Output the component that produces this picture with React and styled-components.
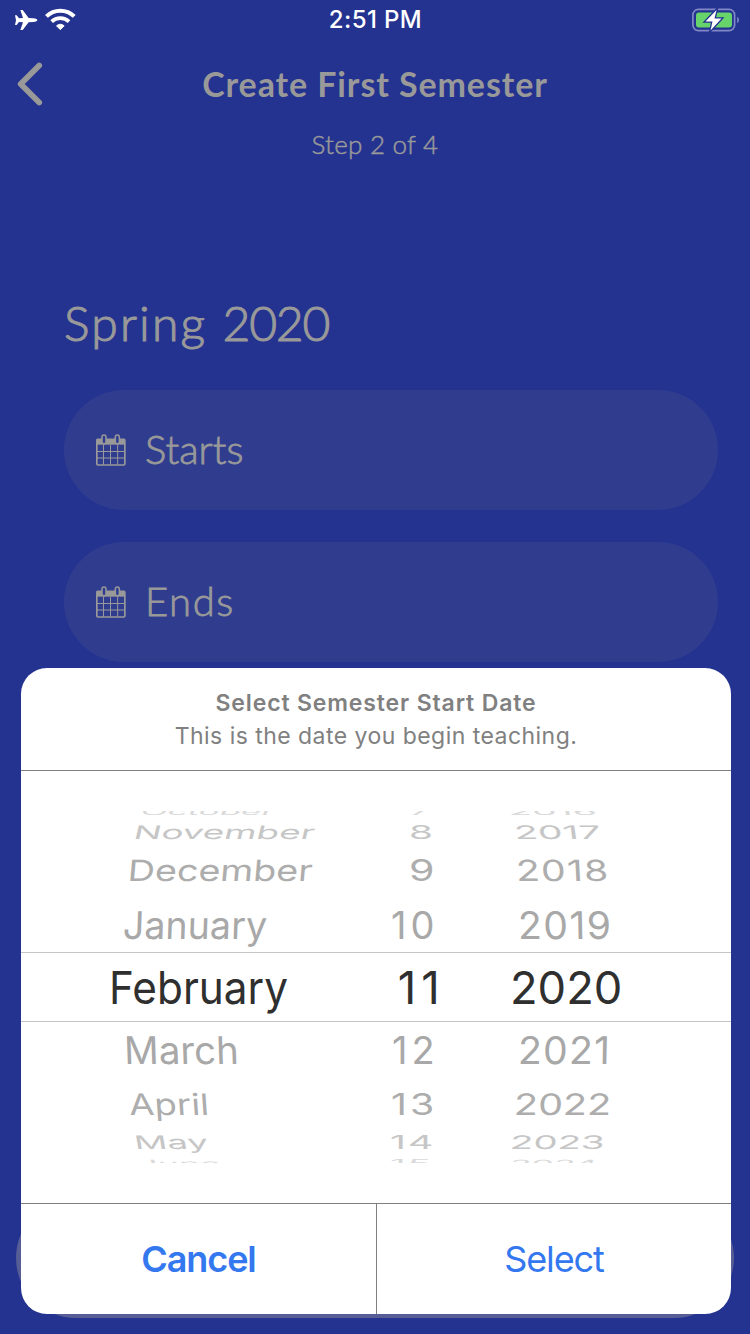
import React from "react";
import styled, { createGlobalStyle } from "styled-components";

const GlobalStyle = createGlobalStyle`
  body {
    margin: 0;
    background: #243290;
  }
  * {
    box-sizing: border-box;
  }
`;

const Screen = styled.div`
  position: relative;
  display: flex;
  flex-direction: column;
  width: 750px;
  height: 1334px;
  overflow: hidden;
  background: #243290;
  color: #999;
  font-family: Lato, "Open Sans", sans-serif;
`;

const StatusBar = styled.div`
  display: grid;
  grid-template-columns: 1fr auto 1fr;
  align-items: center;
  height: 39px;
  padding: 0 11px 0 14px;
`;

const StatusIcons = styled.div`
  display: flex;
  align-items: center;
  gap: 7px;
`;

const Clock = styled.div`
  margin-right: 2px;
  padding-top: 1px;
  color: #fff;
  font: 500 24px/30px Inter, sans-serif;
  letter-spacing: 0.4px;
`;

const BatterySlot = styled.div`
  display: flex;
  justify-content: flex-end;
`;

const Header = styled.div`
  display: grid;
  grid-template-columns: 60px 1fr 60px;
  height: 244px;
`;

const BackButton = styled.div`
  padding: 21px 0 0 15px;
`;

const Heading = styled.div`
  text-align: center;
`;

const Title = styled.div`
  margin-top: 25px;
  font-size: 34px;
  font-weight: 700;
  line-height: 40px;
  letter-spacing: 0.9px;
`;

const Step = styled.div`
  margin-top: 24px;
  font-size: 26px;
  font-weight: 300;
  line-height: 32px;
  letter-spacing: 0.25px;
  -webkit-text-stroke: 0.5px #999;
`;

const Form = styled.div`
  display: flex;
  flex-direction: column;
  gap: 32px;
  padding: 0 32px 0 64px;
`;

const SemesterName = styled.div`
  height: 75px;
  line-height: 80px;
  font-size: 48px;
  font-weight: 300;
  letter-spacing: 2.2px;
  -webkit-text-stroke: 1.1px #999;
`;

const Year = styled.span`
  letter-spacing: -1.2px;
`;

const Field = styled.div`
  display: flex;
  align-items: center;
  gap: 19px;
  height: 120px;
  padding-left: 32px;
  border-radius: 60px;
  background: #303d8f;
`;

const FieldLabel = styled.div`
  padding-bottom: 3px;
  font-size: 40px;
  font-weight: 300;
  line-height: 50px;
  letter-spacing: ${(p) => p.$spacing || 0}px;
  -webkit-text-stroke: 0.8px #999;
`;

// sits behind the sheet, only its edges show
const NextButton = styled.div`
  width: 718px;
  height: 120px;
  margin: auto 16px 16px;
  border-radius: 60px;
  background: #575e96;
`;

const Sheet = styled.div`
  position: absolute;
  left: 21px;
  bottom: 20px;
  display: flex;
  flex-direction: column;
  width: 710px;
  height: 646px;
  overflow: hidden;
  border-radius: 26px;
  background: #fff;
  font-family: Inter, sans-serif;
`;

const SheetHeader = styled.div`
  height: 103px;
  padding-top: 19px;
  border-bottom: 1px solid #7f7f7f;
  color: #808080;
  font-size: 23px;
  line-height: 33px;
  text-align: center;
`;

const SheetTitle = styled.div`
  font-weight: 600;
  letter-spacing: 0.86px;
`;

const SheetMessage = styled.div`
  letter-spacing: 0.46px;
`;

const Picker = styled.div`
  flex: 1;
  padding: 40px 0;
`;

const Wheel = styled.div`
  height: 352px;
  overflow: hidden;
`;

const WheelRow = styled.div`
  display: grid;
  grid-template-columns: 350px 120px 240px;
  align-items: center;
  height: ${(p) => p.$height}px;
  margin-top: ${(p) => p.$shift || 0}px;
  padding-top: ${(p) => p.$drop || 0}px;
  color: ${(p) => p.$color};
  font-size: ${(p) => (p.$active ? 45.5 : 38)}px;
  line-height: 56px;
  border: solid #c6c6c6;
  border-width: ${(p) => (p.$active ? "1px 0" : 0)};
`;

const Cell = styled.div`
  height: 56px;
  margin: -28px 0;
  padding-left: ${(p) => p.$inset}px;
  white-space: nowrap;
`;

const CellText = styled.span`
  display: inline-block;
  letter-spacing: ${(p) => p.$spacing || 0}px;
  transform-origin: left center;
  transform: skewX(${(p) => p.$lean}deg) scale(${(p) => p.$sx}, ${(p) => p.$sy});
`;

const Actions = styled.div`
  display: grid;
  grid-template-columns: 356px 1fr;
  height: 111px;
  border-top: 1px solid #7f7f7f;
`;

const Action = styled.div`
  display: flex;
  align-items: center;
  justify-content: center;
  padding-bottom: 1px;
  color: #3478f0;
  font-size: 36px;
  font-weight: ${(p) => (p.$bold ? 600 : 400)};
  letter-spacing: -1.1px;
  border-right: ${(p) => (p.$bold ? "1px solid #7f7f7f" : "none")};
`;

// each cell: [text, inset, x scale, letter spacing]
const rows = [
  { height: 18, shift: -9, sy: 0.26, lean: -20, color: "#d9d9d9", cells: [["October", 120, 0.92], ["7", 38, 1], ["2016", 17, 1.03]] },
  { height: 24, sy: 0.49, lean: -13, color: "#c6c6c6", cells: [["November", 112.5, 0.97], ["8", 37.5, 1.02], ["2017", 23, 1.03]] },
  { height: 52, sy: 0.77, lean: -5, color: "#adadad", cells: [["December", 106.5, 0.99], ["9", 38, 1.08], ["2018", 24.5, 1.03, 1.1]] },
  { height: 56, drop: 2, sy: 1, lean: -2, color: "#a8a8a8", cells: [["January", 102, 0.99], ["10", 20, 1, 4], ["2019", 27.3, 1.03, 1.4]] },
  { height: 70, drop: 2, sy: 1, lean: 0, color: "#2f2f2f", active: true, cells: [["February", 87.8, 0.93], ["11", 26.7, 1, 5], ["2020", 19.3, 0.995]] },
  { height: 56, sy: 1, lean: 2, color: "#a8a8a8", cells: [["March", 102.5, 1.01], ["12", 21, 1, 4], ["2021", 27, 1.03, 1.2]] },
  { height: 52, sy: 0.78, lean: 4, color: "#adadad", cells: [["April", 107.5, 0.965], ["13", 20, 1.03, 3], ["2022", 22.5, 1.04]] },
  { height: 24, sy: 0.49, lean: 10, color: "#c6c6c6", cells: [["May", 112.5, 0.965], ["14", 19, 1.03, 2], ["2023", 19, 1.01]] },
  { height: 18, sy: 0.26, lean: 18, color: "#d9d9d9", cells: [["June", 117, 0.93], ["15", 19, 1.02, 2], ["2024", 19, 0.93]] },
];

// months tilt towards the middle, years tilt the other way
const leanFactor = [1, 0, -0.6];

const AirplaneIcon = () => (
  <svg width="24" height="22" viewBox="42 24 72 66" fill="#fff">
    <path d="M112 57q0-4-12-5.500L86 51 68 27h-7L69 51 57 52 50 43H45L48 57.500 45 72H50L57 63 69 64 61 87h7L86 64 100 63q12-1.500 12-6z" />
  </svg>
);

const WifiIcon = () => (
  <svg width="31" height="23" viewBox="135 26 93 69" fill="none" stroke="#fff">
    <path d="M139.300 51.300A59 59 0 0 1 222.700 51.300" strokeWidth="12" />
    <path d="M155 67A37 37 0 0 1 207 67" strokeWidth="11" />
    <path d="M181 91L169.500 79.500A16.500 16.500 0 0 1 192.500 79.500Z" fill="#fff" strokeWidth="3" strokeLinejoin="round" />
  </svg>
);

const BatteryIcon = () => (
  <svg width="49" height="26" viewBox="0 0 49 26">
    <rect x="2.900" y="2.400" width="41.700" height="21.200" rx="5.500" fill="none" stroke="#8188c6" strokeWidth="1.700" />
    <rect x="6" y="5.500" width="36" height="15" rx="3" fill="#66d36b" />
    <path d="M47.200 9.800q1.800 1 1.800 3.200t-1.800 3.200z" fill="#8188c6" />
    <path
      d="M26.500 3L15.500 14.500h7L20.500 23.500 31.500 11.500h-7z"
      fill="#fff"
      stroke="#243290"
      strokeWidth="2.600"
      paintOrder="stroke"
    />
  </svg>
);

const BackIcon = () => (
  <svg width="30" height="48" viewBox="0 0 30 48" fill="none">
    <path d="M24.200 5.500L5.700 24 24.200 42.500" stroke="#999" strokeWidth="5.800" strokeLinecap="round" strokeLinejoin="round" />
  </svg>
);

const CalendarIcon = () => (
  <svg width="30" height="32" viewBox="138 162 90 96" fill="none" stroke="#999">
    <rect x="140.500" y="178" width="84" height="77" rx="3" strokeWidth="5" />
    <path d="M140 177H225V194H140Z" fill="#999" stroke="none" />
    <path d="M160.500 194V254M181.500 194V254M203 194V254M140 214.500H224M140 234H224" strokeWidth="3" />
    <rect x="156" y="165" width="12" height="26" rx="6" fill="#303d8f" strokeWidth="4.500" />
    <rect x="196" y="165" width="12" height="26" rx="6" fill="#303d8f" strokeWidth="4.500" />
  </svg>
);

export default function App() {
  return (
    <Screen>
      <GlobalStyle />
      <StatusBar>
        <StatusIcons>
          <AirplaneIcon />
          <WifiIcon />
        </StatusIcons>
        <Clock>2:51 PM</Clock>
        <BatterySlot>
          <BatteryIcon />
        </BatterySlot>
      </StatusBar>

      <Header>
        <BackButton>
          <BackIcon />
        </BackButton>
        <Heading>
          <Title>Create First Semester</Title>
          <Step>Step 2 of 4</Step>
        </Heading>
      </Header>

      <Form>
        <SemesterName>
          Spring <Year>2020</Year>
        </SemesterName>
        <Field>
          <CalendarIcon />
          <FieldLabel>Starts</FieldLabel>
        </Field>
        <Field>
          <CalendarIcon />
          <FieldLabel $spacing={1.6}>Ends</FieldLabel>
        </Field>
      </Form>
      <NextButton />

      <Sheet>
        <SheetHeader>
          <SheetTitle>Select Semester Start Date</SheetTitle>
          <SheetMessage>This is the date you begin teaching.</SheetMessage>
        </SheetHeader>
        <Picker>
          <Wheel>
            {rows.map((row) => (
              <WheelRow
                key={row.cells[0][0]}
                $height={row.height}
                $shift={row.shift}
                $drop={row.drop}
                $color={row.color}
                $active={row.active}
              >
                {row.cells.map(([text, inset, sx, spacing], i) => (
                  <Cell key={text} $inset={inset}>
                    <CellText $sx={sx} $sy={row.sy} $lean={row.lean * leanFactor[i]} $spacing={spacing}>
                      {text}
                    </CellText>
                  </Cell>
                ))}
              </WheelRow>
            ))}
          </Wheel>
        </Picker>
        <Actions>
          <Action $bold>Cancel</Action>
          <Action>Select</Action>
        </Actions>
      </Sheet>
    </Screen>
  );
}
